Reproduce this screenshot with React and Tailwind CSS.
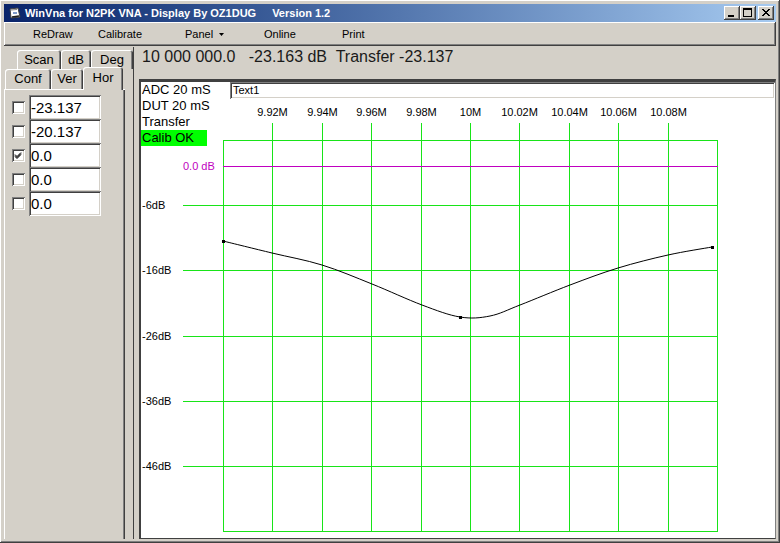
import React from 'react';

const RAISED =
  'shadow-[inset_-1px_-1px_0_#404040,inset_1px_1px_0_#ffffff,inset_-2px_-2px_0_#808080]';
const SUNKEN =
  'shadow-[inset_1px_1px_0_#808080,inset_-1px_-1px_0_#ffffff,inset_2px_2px_0_#404040,inset_-2px_-2px_0_#d4d0c8]';

const GREEN = '#18e418';
const MAGENTA = '#c000c0';

// chart geometry, in chart coordinates (white area origin)
const GX0 = 82;
const GSTEP = 49.4;
const HLINES = [123, 188, 254, 319, 384];
const GBOTTOM = 449;
const GTOP = 58;
const FREQS = ['9.92M', '9.94M', '9.96M', '9.98M', '10M', '10.02M', '10.04M', '10.06M', '10.08M'];
const DB = ['-6dB', '-16dB', '-26dB', '-36dB', '-46dB'];

const TRACE = [
  [82, 159], [131, 171], [181, 183], [231, 202], [281, 223], [319, 235],
  [349, 234], [379, 223], [429, 203], [477, 186], [527, 173], [571, 165],
];

function smooth(pts) {
  let d = `M${pts[0][0]} ${pts[0][1]}`;
  for (let i = 0; i < pts.length - 1; i++) {
    const p0 = pts[i - 1] || pts[i];
    const p1 = pts[i];
    const p2 = pts[i + 1];
    const p3 = pts[i + 2] || p2;
    const c1x = p1[0] + (p2[0] - p0[0]) / 6;
    const c1y = p1[1] + (p2[1] - p0[1]) / 6;
    const c2x = p2[0] - (p3[0] - p1[0]) / 6;
    const c2y = p2[1] - (p3[1] - p1[1]) / 6;
    d += ` C${c1x} ${c1y} ${c2x} ${c2y} ${p2[0]} ${p2[1]}`;
  }
  return d;
}

function vx(i) {
  return Math.round(GX0 + i * GSTEP) + 0.5;
}

function WinButton({ children }) {
  return (
    <div className={`w-[16px] h-[14px] bg-[#d4d0c8] ${RAISED}`}>
      <svg width="16" height="14" viewBox="0 0 16 14">
        {children}
      </svg>
    </div>
  );
}

function TitleBar() {
  return (
    <div className="h-[18px] flex items-center bg-gradient-to-r from-[#0a246a] to-[#a6caf0] text-white">
      <svg width="16" height="16" viewBox="0 0 16 16" className="ml-[3px] mr-[2px]">
        <path d="M3 4 L11 3 L13 12 L4 13 Z" fill="#ffffff" stroke="#404040" strokeWidth="1" />
        <path d="M4 5 L10 4.5" stroke="#808080" />
        <path d="M5 12 L12 11" stroke="#202020" strokeWidth="1.5" />
        <rect x="6" y="7" width="4" height="2" fill="#7f9ac8" />
      </svg>
      <span className="text-[11px] font-bold leading-[18px] whitespace-pre">
        WinVna for N2PK VNA - Display By OZ1DUG
      </span>
      <span className="ml-[16px] text-[11px] font-bold leading-[18px]">Version 1.2</span>
      <div className="ml-auto mr-[2px] flex items-center">
        <WinButton>
          <rect x="4" y="9" width="6" height="2" fill="#000" />
        </WinButton>
        <WinButton>
          <rect x="3.5" y="2.5" width="8" height="8" fill="none" stroke="#000" />
          <rect x="3" y="2" width="9" height="2" fill="#000" />
        </WinButton>
        <div className="w-[2px]" />
        <WinButton>
          <path d="M4 3 L11 10 M5 3 L12 10 M11 3 L4 10 M12 3 L5 10" stroke="#000" strokeWidth="1" />
        </WinButton>
      </div>
    </div>
  );
}

function MenuBar() {
  return (
    <div className={`h-[24px] mb-[1px] flex items-center pl-[29px] text-[11px] text-black ${RAISED}`}>
      <span className="w-[65px]">ReDraw</span>
      <span className="w-[87px]">Calibrate</span>
      <span className="w-[79px] flex items-center">
        Panel
        <svg width="5" height="3" viewBox="0 0 5 3" className="ml-[6px] mt-[1px]">
          <path d="M0 0 L5 0 L2.5 3 Z" fill="#000" />
        </svg>
      </span>
      <span className="w-[78px]">Online</span>
      <span>Print</span>
    </div>
  );
}

function Tab({ label, className, selected }) {
  return (
    <div
      className={`${className} rounded-t-[3px] text-center text-[13px] leading-[16px] bg-[#d4d0c8] shadow-[inset_1px_1px_0_#ffffff,inset_-1px_0_0_#404040,inset_-2px_0_0_#808080] ${
        selected ? 'relative z-10 h-[23px] -mb-[1px] pt-[3px]' : 'h-full pt-[2px]'
      }`}
    >
      {label}
    </div>
  );
}

function CheckBox({ checked }) {
  return (
    <div className={`w-[13px] h-[13px] bg-white shrink-0 ${SUNKEN}`}>
      {checked && (
        <svg width="13" height="13" viewBox="0 0 13 13">
          <path d="M3 5.5 L5 7.5 L9 3.5 M3 6.5 L5 8.5 L9 4.5 M3 7.5 L5 9.5 L9 5.5" stroke="#000" strokeWidth="1" fill="none" />
        </svg>
      )}
    </div>
  );
}

const ROWS = [
  { v: '-23.137', c: false },
  { v: '-20.137', c: false },
  { v: '0.0', c: true },
  { v: '0.0', c: false },
  { v: '0.0', c: false },
];

function LeftPanel() {
  return (
    <div className="w-[121px] flex flex-col shrink-0">
      <div className="h-[42px] pt-[3px] flex flex-col">
        <div className="h-[19px] flex ml-[13px]">
          <Tab label="Scan" className="w-[44px] shrink-0" />
          <Tab label="dB" className="w-[30px] shrink-0" />
          <Tab label="Deg" className="w-[42px] shrink-0" />
        </div>
        <div className="h-[20px] flex items-end ml-[1px]">
          <Tab label="Conf" className="w-[46px]" />
          <Tab label="Ver" className="w-[32px]" />
          <Tab label="Hor" className="w-[40px]" selected />
        </div>
      </div>
      <div className="flex-1 pt-[6px] pl-[8px] shadow-[inset_1px_1px_0_#ffffff,inset_-1px_0_0_#404040,inset_-2px_0_0_#808080]">
        {ROWS.map((r, i) => (
          <div key={i} className="h-[24px] flex items-center gap-[4px]">
            <CheckBox checked={r.c} />
            <div className={`w-[72px] h-[25px] shrink-0 bg-white pl-[2px] text-[15px] leading-[25px] text-black self-start ${SUNKEN}`}>
              {r.v}
            </div>
          </div>
        ))}
      </div>
    </div>
  );
}

function Chart() {
  return (
    <div className="relative flex-1 ml-[5px] bg-white border-l-2 border-l-[#404040] border-t-[3px] border-t-[#404040] border-r border-r-[#808080] border-b border-b-[#404040] overflow-hidden">
      <svg className="absolute inset-0" width="634" height="456" fontFamily="Liberation Sans, Arial, sans-serif">
        {/* horizontal dB lines */}
        {HLINES.map((y, i) => (
          <line key={'h' + i} x1="42" x2="577" y1={y + 0.5} y2={y + 0.5} stroke={GREEN} />
        ))}
        <line x1={GX0} x2="577" y1={GTOP + 0.5} y2={GTOP + 0.5} stroke={GREEN} />
        <line x1={GX0} x2="577" y1={GBOTTOM + 0.5} y2={GBOTTOM + 0.5} stroke={GREEN} />
        {/* vertical lines */}
        {Array.from({ length: 11 }).map((_, i) => (
          <line
            key={'v' + i}
            x1={vx(i)}
            x2={vx(i)}
            y1={i === 0 || i === 10 ? GTOP : 41}
            y2={GBOTTOM + 1}
            stroke={GREEN}
          />
        ))}
        {/* reference line */}
        <line x1={GX0} x2="577" y1="84.5" y2="84.5" stroke={MAGENTA} />
        <text x="42" y="88" fontSize="11" fill={MAGENTA}>0.0 dB</text>
        {FREQS.map((f, i) => (
          <text key={f} x={vx(i + 1)} y="34" fontSize="11" textAnchor="middle" fill="#000">
            {f}
          </text>
        ))}
        {DB.map((d, i) => (
          <text key={d} x="1" y={HLINES[i] + 4} fontSize="11" fill="#000">
            {d}
          </text>
        ))}
        <path d={smooth(TRACE)} fill="none" stroke="#000" strokeWidth="1" />
        <rect x="81" y="158" width="3" height="3" fill="#000" />
        <rect x="318" y="234" width="3" height="3" fill="#000" />
        <rect x="570" y="164" width="3" height="3" fill="#000" />
      </svg>
      <div className="relative flex items-start text-black">
        <div className="w-[89px] shrink-0 text-[13px] leading-[16px]">
          <div className="pl-[1px]">ADC 20 mS</div>
          <div className="pl-[1px]">DUT 20 mS</div>
          <div className="pl-[1px]">Transfer</div>
          <div className="w-[66px] pl-[1px] bg-[#00ff00]">Calib OK</div>
        </div>
        <div className={`flex-1 h-[17px] bg-white pl-[3px] text-[11px] leading-[17px] ${SUNKEN}`}>Text1</div>
      </div>
    </div>
  );
}

export default function App() {
  return (
    <div className="w-[780px] h-[543px] overflow-hidden bg-[#d4d0c8] flex flex-col pt-[4px] px-[4px] pb-[4px] font-['Liberation_Sans',Arial,sans-serif] shadow-[inset_-1px_-1px_0_#404040,inset_1px_1px_0_#ffffff,inset_-2px_-2px_0_#808080]">
      <TitleBar />
      <MenuBar />
      <div className="flex-1 flex min-h-0">
        <LeftPanel />
        <div className="w-[8px] shrink-0" />
        <div className="flex-1 flex flex-col border-l border-l-[#404040] min-w-0">
          <div className="h-[32px] shrink-0 pl-[8px] text-[16px] leading-[20px] text-[#1a1a1a] whitespace-pre">
            10 000 000.0   -23.163 dB  Transfer -23.137
          </div>
          <Chart />
        </div>
      </div>
    </div>
  );
}
